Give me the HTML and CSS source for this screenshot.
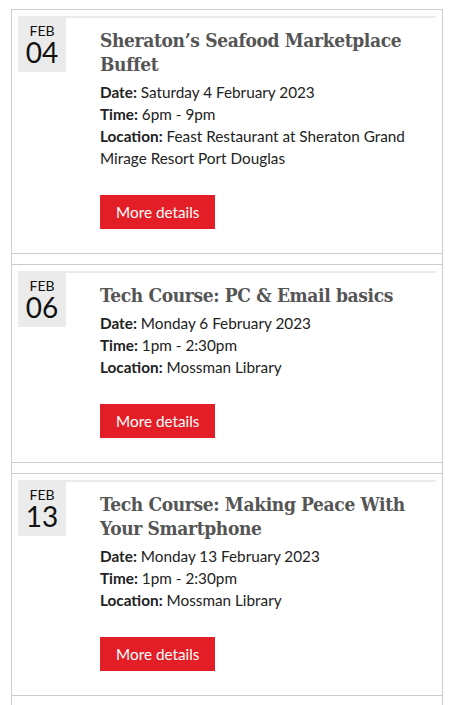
FILE: index.html
```html
<!DOCTYPE html>
<html lang="en">
<head>
    <meta charset="UTF-8">
    <meta name="viewport" content="width=device-width, initial-scale=1.0">
    <title>Events</title>
    <link rel="stylesheet" href="styles.css">
</head>
<body>
    <div class="event-list">
        <div class="event">
            <div class="event-inner">
                <div class="event-date">
                    <span class="month">FEB</span>
                    <span class="day">04</span>
                </div>
                <div class="event-body">
                    <h2 class="event-title">Sheraton’s Seafood Marketplace Buffet</h2>
                    <p><b>Date:</b> Saturday 4 February 2023</p>
                    <p><b>Time:</b> 6pm - 9pm</p>
                    <p><b>Location:</b> Feast Restaurant at Sheraton Grand Mirage Resort Port Douglas</p>
                    <a class="more-button" href="#">More details</a>
                </div>
            </div>
        </div>

        <div class="event">
            <div class="event-inner">
                <div class="event-date">
                    <span class="month">FEB</span>
                    <span class="day">06</span>
                </div>
                <div class="event-body">
                    <h2 class="event-title">Tech Course: PC &amp; Email basics</h2>
                    <p><b>Date:</b> Monday 6 February 2023</p>
                    <p><b>Time:</b> 1pm - 2:30pm</p>
                    <p><b>Location:</b> Mossman Library</p>
                    <a class="more-button" href="#">More details</a>
                </div>
            </div>
        </div>

        <div class="event">
            <div class="event-inner">
                <div class="event-date">
                    <span class="month">FEB</span>
                    <span class="day">13</span>
                </div>
                <div class="event-body">
                    <h2 class="event-title">Tech Course: Making Peace With Your Smartphone</h2>
                    <p><b>Date:</b> Monday 13 February 2023</p>
                    <p><b>Time:</b> 1pm - 2:30pm</p>
                    <p><b>Location:</b> Mossman Library</p>
                    <a class="more-button" href="#">More details</a>
                </div>
            </div>
        </div>

        <div class="event"></div>
    </div>
</body>
</html>
```

FILE: styles.css
```css
body {
    margin: 0;
    padding: 9px 7px 0 11px;
    background-color: #fff;
    font-family: Lato, "Open Sans", sans-serif;
    color: #222;
}

.event-list {
    border-left: 1px solid #ccc;
    border-right: 1px solid #ccc;
}

.event {
    border-top: 1px solid #ccc;
    border-bottom: 1px solid #ccc;
    padding: 6px 6px 0 6px;
    margin-bottom: 10px;
}

.event-inner {
    display: flex;
    border-top: 2px solid #ebebeb;
}

.event-date {
    width: 48px;
    height: 54px;
    flex-shrink: 0;
    background-color: #ebebeb;
    display: flex;
    flex-direction: column;
    align-items: center;
    padding-top: 5px;
    box-sizing: border-box;
}

.month {
    font-size: 14px;
    line-height: 15px;
    color: #111;
}

.day {
    font-size: 28px;
    line-height: 28px;
    color: #111;
}

.event-body {
    padding: 10px 0 24px 34px;
}

.event-title {
    font-family: "DejaVu Serif Condensed", "DejaVu Serif", serif;
    font-stretch: condensed;
    font-weight: bold;
    font-size: 19px;
    line-height: 24px;
    color: #555;
    margin: 0 0 5px 0;
    letter-spacing: -0.35px;
}

.event-body p {
    margin: 0;
    font-size: 15.3px;
    line-height: 22px;
}

.more-button {
    display: inline-block;
    margin-top: 26px;
    padding: 0 16px;
    height: 34px;
    line-height: 34px;
    background-color: #e31e26;
    color: #fff;
    font-size: 15.3px;
    text-decoration: none;
}
```
